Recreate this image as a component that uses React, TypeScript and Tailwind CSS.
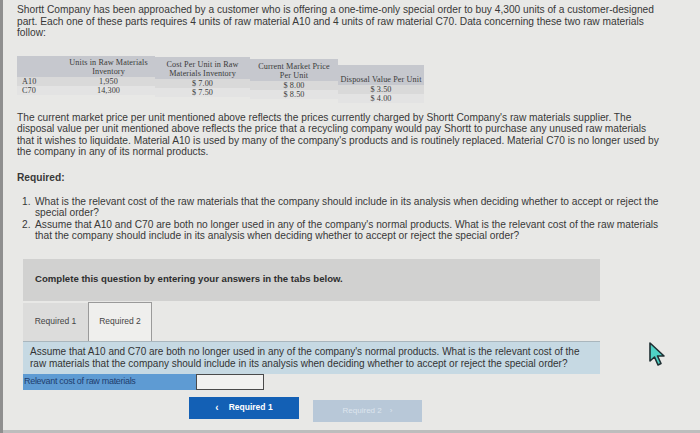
import React from "react";

const rows = [
  { label: "A10", units: "1,950", cost: "$ 7.00", market: "$ 8.00", disposal: "$ 3.50" },
  { label: "C70", units: "14,300", cost: "$ 7.50", market: "$ 8.50", disposal: "$ 4.00" },
];

function Cursor() {
  return (
    <svg width="18" height="26" viewBox="0 0 18 26" className="absolute left-[645px] top-[341px]">
      <path
        d="M2 2 L2 20 L6.5 16 L10 24 L13 22.5 L9.5 15 L16 15 Z"
        fill="#4fd1c5"
        stroke="#1f2f33"
        strokeWidth="1.6"
        strokeLinejoin="round"
      />
    </svg>
  );
}

function DataTable() {
  const serif = "font-['Liberation_Serif',serif] text-[8.2px] leading-[9px] tracking-[0.1px] text-[#3b3b3b]";
  return (
    <div className={`mt-[17px] flex ${serif}`}>
      <div className="flex w-[45px] flex-col">
        <div className="h-[21px] bg-[#c6c8ce]" />
        <div className="h-[9px] bg-[#d9d9d9] pl-[5px]">{rows[0].label}</div>
        <div className="h-[9px] bg-[#e3e3e3] pl-[5px]">{rows[1].label}</div>
      </div>
      <div className="flex w-[93px] flex-col text-center">
        <div className="flex h-[21px] flex-col justify-end bg-[#c6c8ce] pb-[1px]">
          <span>Units in Raw Materials</span>
          <span>Inventory</span>
        </div>
        <div className="h-[9px] bg-[#d9d9d9]">{rows[0].units}</div>
        <div className="h-[9px] bg-[#e3e3e3]">{rows[1].units}</div>
      </div>
      <div className="flex w-[95px] flex-col pt-[1px] text-center">
        <div className="flex h-[22px] flex-col justify-end bg-[#c6c8ce] pb-[1px]">
          <span>Cost Per Unit in Raw</span>
          <span>Materials Inventory</span>
        </div>
        <div className="h-[9px] bg-[#d9d9d9]">{rows[0].cost}</div>
        <div className="h-[9px] bg-[#e3e3e3]">{rows[1].cost}</div>
      </div>
      <div className="flex w-[88px] flex-col pt-[3px] text-center">
        <div className="flex h-[22px] flex-col justify-end bg-[#c6c8ce] pb-[1px]">
          <span>Current Market Price</span>
          <span>Per Unit</span>
        </div>
        <div className="h-[9px] bg-[#d9d9d9]">{rows[0].market}</div>
        <div className="h-[9px] bg-[#e3e3e3]">{rows[1].market}</div>
      </div>
      <div className="flex w-[86px] flex-col pt-[9px] text-center">
        <div className="flex h-[20px] flex-col justify-end bg-[#c6c8ce] pb-[1px]">
          <span>Disposal Value Per Unit</span>
        </div>
        <div className="h-[9px] bg-[#d9d9d9]">{rows[0].disposal}</div>
        <div className="h-[9px] bg-[#e3e3e3]">{rows[1].disposal}</div>
      </div>
    </div>
  );
}

export default function App() {
  return (
    <div className="relative h-[433px] w-[700px] overflow-hidden border-l-[3px] border-[#8f8f8f] bg-[#e8e8e6] font-['Liberation_Sans',sans-serif] text-[#383838]">
      <div className="whitespace-nowrap pl-[14px] pt-[4px] text-[10.2px]">
        <p className="leading-[11.5px]">
          Shortt Company has been approached by a customer who is offering a one-time-only special order to buy 4,300 units of a customer-designed
          <br />
          part. Each one of these parts requires 4 units of raw material A10 and 4 units of raw material C70. Data concerning these two raw materials
          <br />
          follow:
        </p>

        <DataTable />

        <p className="mt-[9px] leading-[11.5px]">
          The current market price per unit mentioned above reflects the prices currently charged by Shortt Company's raw materials supplier. The
          <br />
          disposal value per unit mentioned above reflects the price that a recycling company would pay Shortt to purchase any unused raw materials
          <br />
          that it wishes to liquidate. Material A10 is used by many of the company's products and is routinely replaced. Material C70 is no longer used by
          <br />
          the company in any of its normal products.
        </p>

        <p className="mt-[14px] font-bold leading-[12px]">Required:</p>

        <ol className="mt-[12px] pl-[5px] leading-[11.5px]">
          <li className="flex">
            <span className="w-[13px] shrink-0">1.</span>
            <span>
              What is the relevant cost of the raw materials that the company should include in its analysis when deciding whether to accept or reject the
              <br />
              special order?
            </span>
          </li>
          <li className="flex">
            <span className="w-[13px] shrink-0">2.</span>
            <span>
              Assume that A10 and C70 are both no longer used in any of the company's normal products. What is the relevant cost of the raw materials
              <br />
              that the company should include in its analysis when deciding whether to accept or reject the special order?
            </span>
          </li>
        </ol>
      </div>

      <div className="ml-[20px] mt-[17px] w-[577px]">
        <div className="flex h-[42px] items-center bg-[#d1d1d0] pl-[12px] text-[9.6px] font-bold text-[#2e2e2e]">
          Complete this question by entering your answers in the tabs below.
        </div>

        <div className="flex h-[40px] items-end">
          <div className="flex h-[38px] w-[65px] items-center justify-center bg-[#dcdcdb] text-[8.5px] text-[#444]">
            Required 1
          </div>
          <div className="flex h-[39px] w-[64px] items-center justify-center border border-b-0 border-[#9a9a9a] bg-[#efefed] text-[8.5px] text-[#444]">
            Required 2
          </div>
        </div>

        <div className="flex h-[33px] flex-col justify-center whitespace-nowrap border-t border-[#a9b6bd] bg-[#c6d9e3] pl-[7px] text-[10px] leading-[11.5px] text-[#333]">
          <span>Assume that A10 and C70 are both no longer used in any of the company's normal products. What is the relevant cost of the</span>
          <span>raw materials that the company should include in its analysis when deciding whether to accept or reject the special order?</span>
        </div>

        <div className="flex h-[16px]">
          <div className="flex w-[173px] items-center bg-[#5e9bd3] pl-[1px] text-[9px] tracking-[-0.3px] text-[#1e3e6e]">
            Relevant cost of raw materials
          </div>
          <div className="w-[68px] border-[1.5px] border-[#4a4a4a] bg-[#f1f1f0]" />
        </div>

        <div className="mt-[7px] flex items-start">
          <button className="ml-[166px] flex h-[22px] w-[110px] items-center justify-center gap-[10px] bg-[#1360b5] text-[8.5px] font-bold text-white">
            <span className="text-[10px]">‹</span>
            <span>Required 1</span>
          </button>
          <button className="ml-[14px] mt-[3px] flex h-[22px] w-[109px] items-center justify-center gap-[8px] bg-[#b8c8d8] text-[8px] text-[#dde5ee]">
            <span>Required 2</span>
            <span>›</span>
          </button>
        </div>
      </div>

      <div className="absolute bottom-0 left-0 h-[3px] w-full bg-[#bdbdbd]" />
      <Cursor />
    </div>
  );
}
